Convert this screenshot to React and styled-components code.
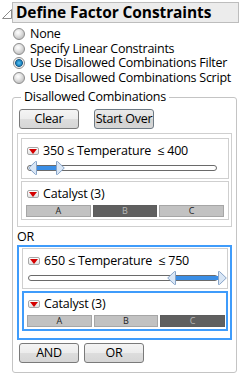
import React from "react";
import styled, { createGlobalStyle } from "styled-components";

const Global = createGlobalStyle`
  html, body { margin: 0; padding: 0; background: #fff; }
  body { font-family: "Open Sans", "Noto Sans", sans-serif; font-size: 12px; color: #000; }
`;

const Page = styled.div`
  width: 243px;
  height: 377px;
  overflow: hidden;
  background: #fff;
  box-sizing: border-box;
  padding-top: 2px;
`;

const Header = styled.div`
  display: flex;
  align-items: flex-end;
  padding-left: 2px;
  margin-right: 4px;
`;

const TitleBox = styled.div`
  flex: 1;
  height: 19px;
  border: 1px solid #bdbdbd;
  background: #ececec;
  padding-left: 3px;
  font-weight: 700;
  font-size: 15.5px;
  line-height: 19px;
  letter-spacing: -0.1px;
  white-space: nowrap;
`;

const RadioList = styled.div`
  display: flex;
  flex-direction: column;
  padding-left: 13px;
  margin-top: 4px;
`;

const RadioRow = styled.label`
  display: flex;
  align-items: center;
  gap: 5px;
  height: 14.5px;
  line-height: 14.5px;
  font-size: 12.5px;
  letter-spacing: -0.25px;
  white-space: nowrap;
`;

const RadioDot = styled.span`
  width: 10px;
  height: 10px;
  border-radius: 50%;
  border: 1px solid #8c8c8c;
  flex: none;
  background: ${(p) =>
    p.$on
      ? "radial-gradient(circle at 50% 50%, #5fc3f2 0, #1d8ac6 2.5px, #205e8a 3.6px, #e6e6e6 4.2px, #f6f6f6 5px)"
      : "radial-gradient(circle at 40% 35%, #ffffff 0, #e8e8e8 3px, #c8c8c8 6px)"};
`;

const Fieldset = styled.fieldset`
  margin: 4px 6px 0 12px;
  padding: 4px 4px 9px 4px;
  border: 1px solid #c4c4c4;
  border-radius: 3px;
  min-width: 0;
`;

const Legend = styled.legend`
  padding: 0 3px;
  margin-left: 4px;
  font-size: 12.5px;
  letter-spacing: -0.25px;
  line-height: 16px;
`;

const ButtonRow = styled.div`
  display: flex;
  gap: ${(p) => p.$gap}px;
  padding-left: 2px;
`;

const Button = styled.button`
  width: 60px;
  height: 20px;
  padding: 0;
  border: 1px solid ${(p) => (p.$dark ? "#6e7a84" : "#7a7a7a")};
  border-radius: 3px;
  background: ${(p) =>
    p.$dark
      ? "linear-gradient(#eaeaea, #e0e0e0 50%, #d2d2d2 51%, #d6d6d6)"
      : "linear-gradient(#f4f4f4, #ececec 50%, #dddddd 51%, #d6d6d6)"};
  font-family: inherit;
  font-size: 12.5px;
  letter-spacing: -0.25px;
  color: #000;
  line-height: 18px;
`;

const Group = styled.div`
  margin-top: ${(p) => p.$mt}px;
  border: ${(p) => (p.$selected ? "2px solid #3f9cfb" : "1px solid #cfcfcf")};
  padding: ${(p) => (p.$selected ? "1px 2px 7px 3px" : "4px 2px 6px 3px")};
  display: flex;
  flex-direction: column;
  gap: 2px;
`;

const Panel = styled.div`
  height: ${(p) => p.$h}px;
  box-sizing: border-box;
  border: ${(p) => (p.$selected ? "2px solid #3f9cfb" : "1px solid #cfcfcf")};
  padding: ${(p) => (p.$selected ? "3px 4px 0 4px" : "4px 5px 0 5px")};
  display: flex;
  flex-direction: column;
`;

const TitleRow = styled.div`
  display: flex;
  align-items: center;
  gap: 4px;
  height: 16px;
  line-height: 16px;
  font-size: 12.5px;
  letter-spacing: -0.2px;
  white-space: pre;
`;

const MenuBtn = styled.span`
  width: 10px;
  height: 6px;
  border: 1px solid #a8a8a8;
  border-radius: 2px;
  background: linear-gradient(#ffffff, #e2e2e2);
  display: flex;
  align-items: center;
  justify-content: center;
  flex: none;
`;

const Track = styled.div`
  position: relative;
  margin-top: ${(p) => p.$mt}px;
  width: 190px;
  height: 6px;
  box-sizing: border-box;
  border: 1px solid #6a6a6a;
  border-radius: 3px;
  background: #fff;
`;

const Fill = styled.div`
  position: absolute;
  top: 0;
  bottom: 0;
  background: #3a8ee6;
`;

const Handle = styled.svg`
  position: absolute;
  top: -5px;
`;

const Bars = styled.div`
  display: grid;
  grid-template-columns: repeat(3, 1fr);
  gap: 2px;
  margin-top: 3px;
  margin-left: -1px;
  width: 198px;
`;

const Bar = styled.div`
  height: 12px;
  box-sizing: border-box;
  border: 1px solid ${(p) => (p.$on ? "#5c5c5c" : "#a6a6a6")};
  background: ${(p) => (p.$on ? "#606060" : "#c2c2c2")};
  color: ${(p) => (p.$on ? "#b8b8b8" : "#222")};
  font-size: 9px;
  line-height: 10px;
  text-align: center;
`;

const OrLabel = styled.div`
  margin-top: 2px;
  height: 16px;
  line-height: 16px;
  font-size: 12.5px;
  letter-spacing: -0.2px;
`;

const BottomRow = styled(ButtonRow)`
  margin-top: 3px;
`;

const CollapseIcon = () => (
  <svg width="10" height="12" viewBox="0 0 10 12" style={{ marginBottom: 3 }}>
    <path d="M0.5 10.5 L9.5 1.5 L9.5 10.5 Z" fill="#fff" stroke="#8a8a8a" strokeWidth="1" />
  </svg>
);

const RedTri = () => (
  <svg width="8" height="5" viewBox="0 0 8 5">
    <path d="M0 0 L8 0 L4 5 Z" fill="#d40000" />
  </svg>
);

const LeftHandle = ({ x }) => (
  <Handle width="9" height="14" viewBox="0 0 9 14" style={{ left: x - 8 }}>
    <path d="M0.7 7 L7.5 0.5 L8.5 0.5 L8.5 13.5 L7.5 13.5 Z" fill="#d9e6f5" stroke="#87a4c8" strokeWidth="1" />
  </Handle>
);

const RightHandle = ({ x }) => (
  <Handle width="9" height="14" viewBox="0 0 9 14" style={{ left: x }}>
    <path d="M8.3 7 L1.5 0.5 L0.5 0.5 L0.5 13.5 L1.5 13.5 Z" fill="#d9e6f5" stroke="#87a4c8" strokeWidth="1" />
  </Handle>
);

const Slider = ({ lo, hi, mt }) => (
  <Track $mt={mt}>
    <Fill style={{ left: lo - 4, width: hi - lo + 6 }} />
    <LeftHandle x={lo} />
    <RightHandle x={hi} />
  </Track>
);

const TempPanel = ({ h, lo, hi, text, mt }) => (
  <Panel $h={h}>
    <TitleRow>
      <MenuBtn>
        <RedTri />
      </MenuBtn>
      {text}
    </TitleRow>
    <Slider lo={lo} hi={hi} mt={mt} />
  </Panel>
);

const CatPanel = ({ h, on, selected }) => (
  <Panel $h={h} $selected={selected}>
    <TitleRow>
      <MenuBtn>
        <RedTri />
      </MenuBtn>
      Catalyst (3)
    </TitleRow>
    <Bars>
      {["A", "B", "C"].map((l) => (
        <Bar key={l} $on={l === on}>
          {l}
        </Bar>
      ))}
    </Bars>
  </Panel>
);

const options = [
  "None",
  "Specify Linear Constraints",
  "Use Disallowed Combinations Filter",
  "Use Disallowed Combinations Script",
];

export default function App() {
  return (
    <>
      <Global />
      <Page>
        <Header>
          <CollapseIcon />
          <TitleBox>Define Factor Constraints</TitleBox>
        </Header>
        <RadioList>
          {options.map((o, i) => (
            <RadioRow key={o}>
              <RadioDot $on={i === 2} />
              {o}
            </RadioRow>
          ))}
        </RadioList>
        <Fieldset>
          <Legend>Disallowed Combinations</Legend>
          <ButtonRow $gap={15}>
            <Button>Clear</Button>
            <Button $dark>Start Over</Button>
          </ButtonRow>
          <Group $mt={4}>
            <TempPanel h={41} lo={8} hi={28} mt={6} text="350 ≤ Temperature  ≤ 400" />
            <CatPanel h={39} on="B" />
          </Group>
          <OrLabel>OR</OrLabel>
          <Group $selected>
            <TempPanel h={41} lo={146} hi={189} mt={6} text="650 ≤ Temperature  ≤ 750" />
            <CatPanel h={40} on="C" selected />
          </Group>
          <BottomRow $gap={5}>
            <Button>AND</Button>
            <Button>OR</Button>
          </BottomRow>
        </Fieldset>
      </Page>
    </>
  );
}
